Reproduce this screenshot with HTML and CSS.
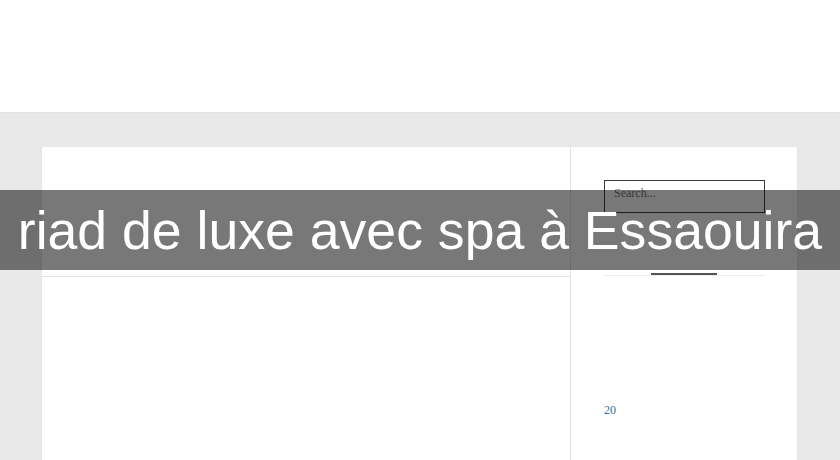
FILE: index.html
```html
<!DOCTYPE html>
<html lang="fr">
<head>
  <meta charset="UTF-8">
  <meta name="viewport" content="width=device-width, initial-scale=1.0">
  <title>riad de luxe avec spa à Essaouira</title>
  <link rel="stylesheet" href="styles.css">
</head>
<body>
  <header class="site-header"></header>

  <div class="page">
    <div class="content">
      <main class="main">
        <div class="entry-header"></div>
      </main>
      <aside class="sidebar">
        <form class="search-form">
          <input type="search" class="search-field" placeholder="Search...">
        </form>
        <div class="tabs">
          <span class="tab-active"></span>
        </div>
        <div class="calendar">
          <a href="#" class="cal-day">20</a>
        </div>
      </aside>
    </div>
  </div>

  <div class="banner">
    <h1>riad de luxe avec spa à Essaouira</h1>
  </div>
</body>
</html>
```

FILE: styles.css
```css
body {
  margin: 0;
  padding: 0;
  background-color: #e9e9e9;
  font-family: "Liberation Serif", serif;
  height: 460px;
  overflow: hidden;
}
.site-header {
  height: 112px;
  background-color: #fff;
  border-bottom: 1px solid #e3e3e3;
}
.page {
  padding: 34px 43px 0 42px;
}
.content {
  display: flex;
  background-color: #fff;
  height: 320px;
  box-shadow: 0 0 1px rgba(0, 0, 0, 0.08);
}
.main {
  width: 528px;
  border-right: 1px solid #e5e5e5;
}
.entry-header {
  height: 129px;
  border-bottom: 1px solid #e4e4e4;
}
.sidebar {
  flex: 1;
  padding: 33px 32px 0 33px;
}
.search-form {
  margin: 0;
}
.search-field {
  box-sizing: border-box;
  width: 161px;
  height: 33px;
  margin: 0;
  padding: 0 9px 7px;
  border: 1px solid #3a3a3a;
  font-family: "Liberation Serif", serif;
  font-size: 12px;
  color: #555;
  background: #fff;
  outline: none;
}
.search-field::placeholder {
  color: #777;
}
.tabs {
  width: 161px;
  height: 2px;
  margin-top: 60px;
  border-bottom: 1px solid #ececec;
}
.tab-active {
  display: block;
  margin-left: 47px;
  width: 66px;
  height: 2px;
  background-color: #555;
}
.calendar {
  margin-top: 124px;
}
.cal-day {
  font-size: 12px;
  color: #2f6fa3;
  text-decoration: none;
}
.banner {
  position: absolute;
  left: 0;
  top: 190px;
  width: 100%;
  height: 80px;
  background-color: rgba(0, 0, 0, 0.53);
}
.banner h1 {
  margin: 0;
  font-family: "Liberation Sans", Arial, sans-serif;
  font-weight: normal;
  font-size: 53.6px;
  line-height: 80px;
  color: #fff;
  text-align: center;
  white-space: nowrap;
}
```
